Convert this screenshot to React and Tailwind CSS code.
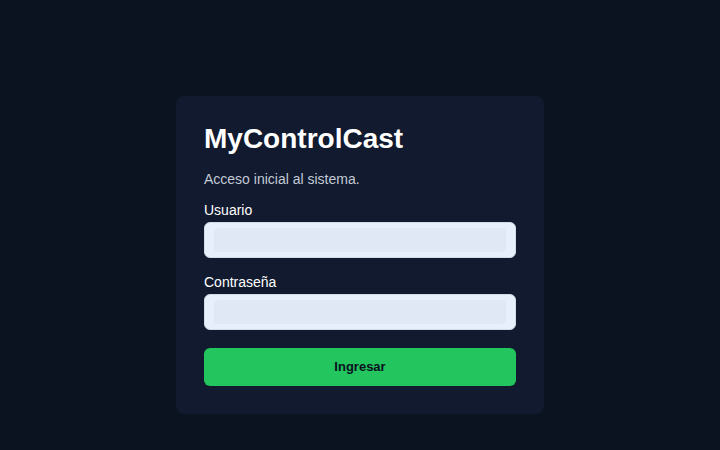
import React from 'react';

const fields = [
  { id: 'usuario', label: 'Usuario', type: 'text' },
  { id: 'contrasena', label: 'Contraseña', type: 'password' },
];

const App = () => {
  return (
    <div
      className="min-h-screen w-full bg-[#0b1220] flex items-start justify-center pt-[96px]"
      style={{ fontFamily: '"Liberation Sans", Arial, sans-serif' }}
    >
      <div className="w-[368px] rounded-lg bg-[#111a2e] px-[28px] pt-[26px] pb-[28px]">
        <h1 className="text-[28px] leading-[34px] font-bold text-white">MyControlCast</h1>
        <p className="mt-[14px] text-sm leading-[18px] text-[#c3cad6]">Acceso inicial al sistema.</p>

        <form className="mt-[13px]" onSubmit={(e) => e.preventDefault()}>
          {fields.map((f, index) => (
            <div key={f.id} className={index === 0 ? '' : 'mt-[15px]'}>
              <label htmlFor={f.id} className="block text-sm leading-[18px] text-white mb-[3px]">
                {f.label}
              </label>
              <input
                id={f.id}
                type={f.type}
                className="block w-full h-[36px] rounded-md border border-[#d3dbe9] bg-[#e0e7f5] shadow-[inset_9px_5px_0_#e7eefc,inset_-9px_-5px_0_#e7eefc] outline-none px-3 text-sm text-gray-900"
              />
            </div>
          ))}

          <button
            type="submit"
            className="mt-[18px] w-full h-[38px] rounded-md bg-[#22c55e] text-[13px] font-bold text-[#0b1220]"
          >
            Ingresar
          </button>
        </form>
      </div>
    </div>
  );
};

export default App;
